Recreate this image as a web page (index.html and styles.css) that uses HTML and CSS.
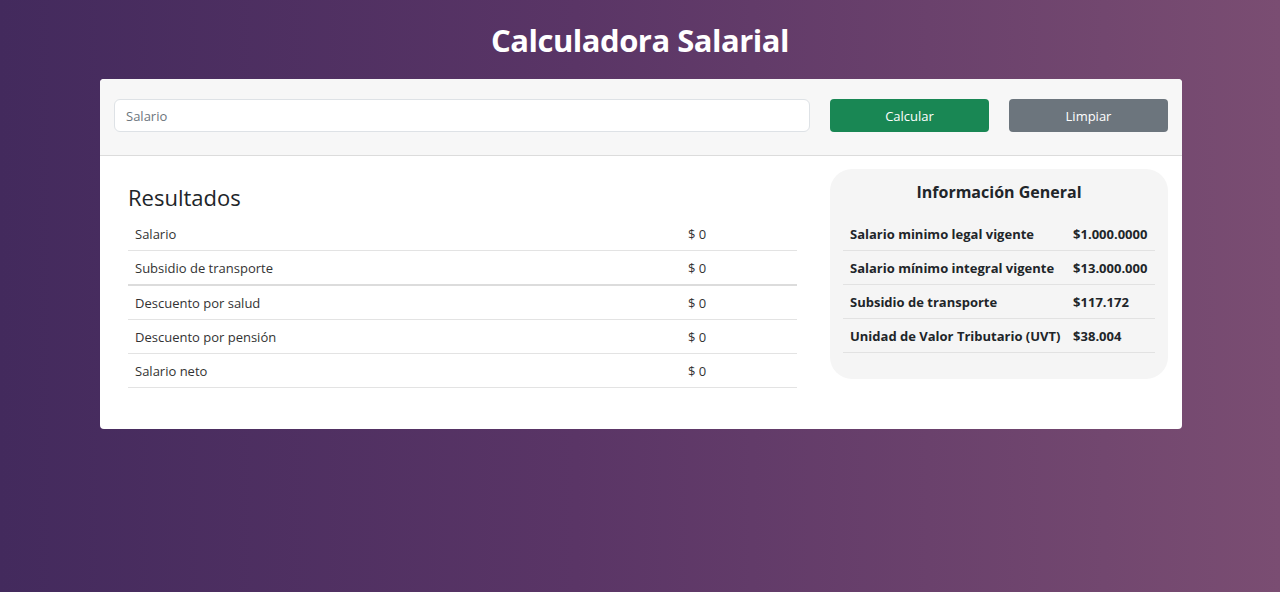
FILE: index.html
```html
<!DOCTYPE html>
<html lang="es">
<head>
<meta charset="utf-8">
<title>Calculadora Salarial</title>
<link rel="stylesheet" href="styles.css">
</head>
<body>
<h1 class="title">Calculadora Salarial</h1>
<div class="card">
  <div class="card-header">
    <input class="input" type="text" placeholder="Salario">
    <button class="btn btn-green">Calcular</button>
    <button class="btn btn-gray">Limpiar</button>
  </div>
  <div class="card-body">
    <div class="results">
      <h2 class="results-title">Resultados</h2>
      <table class="table">
        <tr><td>Salario</td><td class="val">$ 0</td></tr>
        <tr class="thick"><td>Subsidio de transporte</td><td class="val">$ 0</td></tr>
        <tr><td>Descuento por salud</td><td class="val">$ 0</td></tr>
        <tr><td>Descuento por pensión</td><td class="val">$ 0</td></tr>
        <tr><td>Salario neto</td><td class="val">$ 0</td></tr>
      </table>
    </div>
    <div class="info">
      <h3 class="info-title">Información General</h3>
      <table class="info-table">
        <tr><td>Salario minimo legal vigente</td><td>$1.000.0000</td></tr>
        <tr><td>Salario mínimo integral vigente</td><td>$13.000.000</td></tr>
        <tr><td>Subsidio de transporte</td><td>$117.172</td></tr>
        <tr><td>Unidad de Valor Tributario (UVT)</td><td>$38.004</td></tr>
      </table>
    </div>
  </div>
</div>
</body>
</html>
```
FILE: styles.css
```css
html, body {
  margin: 0;
  height: 100%;
}
body {
  font-family: "Open Sans", "Noto Sans", sans-serif;
  background: linear-gradient(90deg, #432a5d 0%, #5a3566 45%, #7a4d72 100%);
  color: #212529;
  padding-top: 17px;
  box-sizing: border-box;
}
.title {
  margin: 0 0 16px;
  text-align: center;
  color: #fff;
  font-size: 31px;
  font-weight: 700;
  line-height: 46px;
  letter-spacing: -0.5px;
}
.card {
  width: 1082px;
  margin: 0 0 0 100px;
  background: #fff;
  border-radius: 4px;
  padding-bottom: 41px;
}
.card-header {
  background: #f7f7f7;
  border-radius: 4px 4px 0 0;
  border-bottom: 1px solid #dcdcdc;
  display: flex;
  align-items: center;
  gap: 20px;
  padding: 20px 14px 23px;
}
.input {
  width: 696px;
  height: 33px;
  box-sizing: border-box;
  border: 1px solid #dee2e6;
  border-radius: 6px;
  padding: 0 11px;
  font-family: inherit;
  font-size: 13px;
  color: #212529;
  background: #fff;
}
.input::placeholder { color: #6c757d; }
.btn {
  width: 159px;
  height: 33px;
  border: none;
  border-radius: 4px;
  color: #fff;
  font-family: inherit;
  font-size: 13px;
}
.btn-green { background: #198754; }
.btn-gray { background: #6c757d; }
.card-body {
  display: flex;
  padding: 13px 14px 0 28px;
  gap: 33px;
  align-items: flex-start;
}
.results {
  width: 669px;
  padding-top: 14px;
}
.results-title {
  margin: 0 0 6px;
  font-size: 22px;
  font-weight: 500;
  line-height: 28px;
}
.table, .info-table {
  width: 100%;
  border-collapse: collapse;
  font-size: 13px;
}
.table td {
  height: 33px;
  padding: 0 7px;
  border-bottom: 1px solid #e3e3e3;
  color: #333;
}
.table tr.thick td { border-bottom: 2px solid #dcdcdc; }
.table td.val { width: 95px; padding-left: 0; padding-right: 14px; }
.info {
  width: 338px;
  background: #f5f5f5;
  border-radius: 22px;
  padding: 11px 13px 26px;
  box-sizing: border-box;
}
.info-title {
  margin: 0 0 13px;
  text-align: center;
  font-size: 16px;
  font-weight: 700;
  line-height: 24px;
}
.info-table td {
  height: 33px;
  padding: 0 7px;
  border-bottom: 1px solid #e2e2e2;
  font-weight: 700;
  white-space: nowrap;
}
.info-table td + td { padding-left: 4px; }
```
